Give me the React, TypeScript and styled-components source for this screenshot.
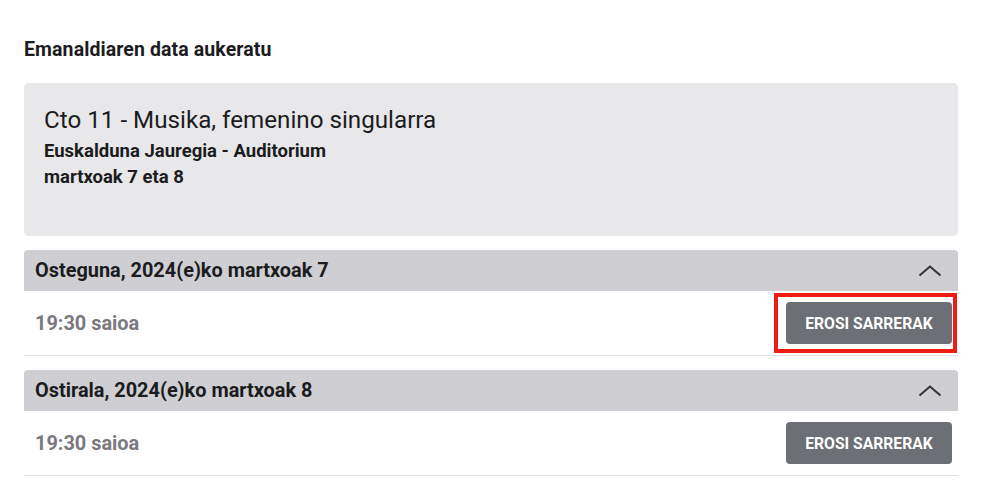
import styled, { createGlobalStyle } from 'styled-components';

interface Show {
	date: string;
	time: string;
	highlighted?: boolean;
}

const shows: Show[] = [
	{ date: 'Osteguna, 2024(e)ko martxoak 7', time: '19:30 saioa', highlighted: true },
	{ date: 'Ostirala, 2024(e)ko martxoak 8', time: '19:30 saioa' },
];

const GlobalStyle = createGlobalStyle`
	body {
		margin: 0;
		background: #fff;
		font-family: Roboto, 'Liberation Sans', sans-serif;
		color: #1c1c1e;
	}
`;

const ChevronUp = () => (
	<svg width="24" height="12" viewBox="0 0 24 12" fill="none">
		<path d="M1.5 10.5 L12 1.5 L22.5 10.5" stroke="#333" strokeWidth="2" />
	</svg>
);

const App = () => {
	return (
		<Page>
			<GlobalStyle />
			<Heading>Emanaldiaren data aukeratu</Heading>
			<InfoCard>
				<Title>Cto 11 - Musika, femenino singularra</Title>
				<Detail>Euskalduna Jauregia - Auditorium</Detail>
				<Detail>martxoak 7 eta 8</Detail>
			</InfoCard>
			{shows.map((show) => (
				<DaySection key={show.date}>
					<DayHeader>
						<DayTitle>{show.date}</DayTitle>
						<ChevronUp />
					</DayHeader>
					<SessionRow>
						<SessionTime>{show.time}</SessionTime>
						<BuyWrap>
							<BuyButton>Erosi sarrerak</BuyButton>
							{show.highlighted && <Highlight />}
						</BuyWrap>
					</SessionRow>
				</DaySection>
			))}
		</Page>
	);
};

const Page = styled.div`
	width: 934px;
	padding: 38px 0 0 24px;
`;

const Heading = styled.h2`
	margin: 0;
	font-size: 19.5px;
	font-weight: 700;
	line-height: 24px;
	letter-spacing: 0.1px;
`;

const InfoCard = styled.div`
	margin-top: 21px;
	height: 153px;
	box-sizing: border-box;
	padding: 21px 20px;
	background: #e8e8ea;
	border-radius: 5px;
`;

const Title = styled.h1`
	margin: 0 0 2px;
	font-size: 24.2px;
	font-weight: 400;
	line-height: 32px;
`;

const Detail = styled.p`
	margin: 0;
	font-size: 18.5px;
	font-weight: 700;
	line-height: 26px;
`;

const DaySection = styled.section`
	margin-top: 14px;
	border-bottom: 1px solid #e2e2e4;
`;

const DayHeader = styled.div`
	display: flex;
	justify-content: space-between;
	align-items: center;
	height: 41px;
	padding: 0 16px 0 11px;
	background: #cfcfd3;
	border-radius: 4px 4px 0 0;
`;

const DayTitle = styled.h3`
	margin: 0;
	font-size: 19.9px;
	font-weight: 700;
`;

const SessionRow = styled.div`
	display: flex;
	justify-content: space-between;
	align-items: center;
	height: 64px;
	padding: 0 6px 0 11px;
`;

const SessionTime = styled.span`
	font-size: 19.9px;
	font-weight: 700;
	color: #7a7a7e;
`;

const BuyWrap = styled.div`
	position: relative;
	display: flex;
`;

const BuyButton = styled.button`
	width: 166px;
	height: 42px;
	padding: 0;
	border: none;
	border-radius: 4px;
	background: #6c6f75;
	color: #fff;
	font-family: Roboto, 'Liberation Sans', sans-serif;
	font-size: 15.7px;
	font-weight: 700;
	text-transform: uppercase;
`;

const Highlight = styled.span`
	position: absolute;
	top: -9px;
	bottom: -9px;
	left: -12px;
	right: -5px;
	border: 4px solid #ee1c12;
	pointer-events: none;
`;

export default App;
